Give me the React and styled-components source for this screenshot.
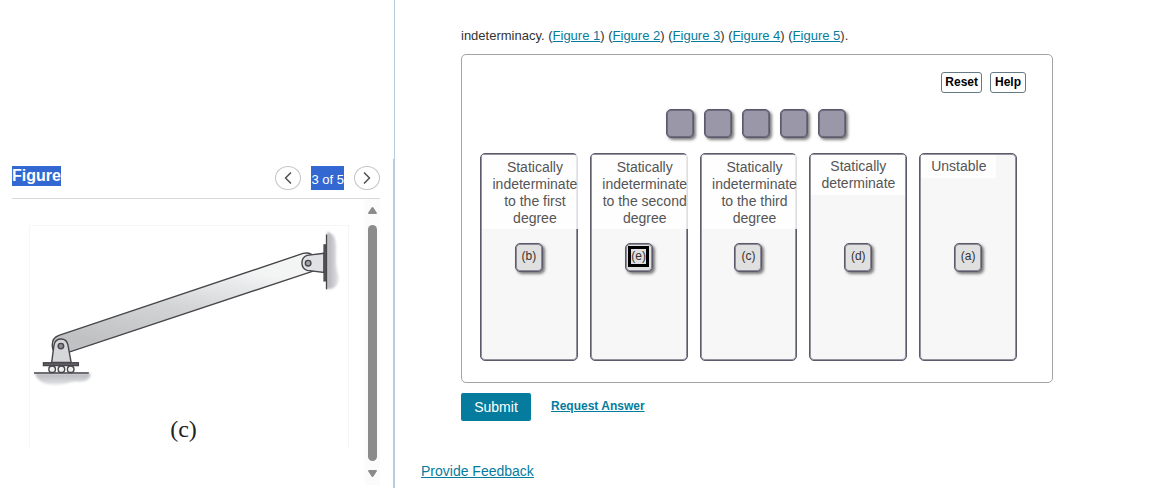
import React, { useState } from "react";
import styled, { createGlobalStyle } from "styled-components";
import { ChevronLeft, ChevronRight } from "lucide-react";

const figures = [1, 2, 3, 4, 5];

const bins = [
  { label: "Statically indeterminate to the first degree", item: "(b)", wide: true },
  { label: "Statically indeterminate to the second degree", item: "(e)", wide: true },
  { label: "Statically indeterminate to the third degree", item: "(c)", wide: true },
  { label: "Statically determinate", item: "(d)" },
  { label: "Unstable", item: "(a)" },
];

const BeamDrawing = () => (
  <Drawing viewBox="30 226 319 174" role="img" aria-label="Beam with a roller and a pin support">
    <defs>
      <linearGradient id="beam" gradientUnits="userSpaceOnUse" x1="150" y1="350" x2="165" y2="258">
        <stop offset="0" stopColor="#bfc1c3" />
        <stop offset="0.5" stopColor="#d2d4d6" />
        <stop offset="1" stopColor="#f3f4f4" />
      </linearGradient>
      <linearGradient id="ground" x1="0" y1="0" x2="0" y2="1">
        <stop offset="0" stopColor="#b4b5ba" />
        <stop offset="1" stopColor="#e4e4e8" />
      </linearGradient>
      <linearGradient id="wall" x1="0" y1="0" x2="1" y2="0">
        <stop offset="0" stopColor="#b0b0b5" />
        <stop offset="1" stopColor="#e2e2e6" />
      </linearGradient>
      <filter id="soft" x="-20%" y="-20%" width="140%" height="140%">
        <feGaussianBlur stdDeviation="1" />
      </filter>
    </defs>

    <path
      d="M35 374 H91 C90 380 86 383 78 382 C70 381 66 386 52 385 C42 385 37 380 35 374 Z"
      fill="url(#ground)"
      filter="url(#soft)"
    />
    <path
      d="M328 232 C334 233 337 238 337 246 C337 258 336 264 339 275 C341 285 335 290 328 289 Z"
      fill="url(#wall)"
      filter="url(#soft)"
    />

    <g stroke="#48464a" strokeWidth="1.4">
      <path
        d="M59 335.8 L304 253.5 C310 252 316 255 317 261 C318 267 316 271 311 272.2 L70 352.3 L53 350 C51 342 53 338 59 335.8 Z"
        fill="url(#beam)"
      />
      <path d="M51.7 363 L54 346 C55 337.5 66 337 68 345 L71.3 363 Z" fill="#d5d7d9" />
      <path d="M325 253.3 L308 255.5 A8 8 0 0 0 308 270.5 L325 272.7 Z" fill="#dfe1e3" />
      <circle cx="61" cy="346.5" r="2.8" fill="#8c8c90" />
      <circle cx="309" cy="263.3" r="2.8" fill="#a2a2a6" />
      <rect x="43.5" y="363.2" width="35" height="2.8" fill="#666469" />
      <circle cx="52.2" cy="369.7" r="3.3" fill="#eee" />
      <circle cx="61.5" cy="369.7" r="3.3" fill="#eee" />
      <circle cx="70.8" cy="369.7" r="3.3" fill="#eee" />
      <rect x="325" y="245" width="2" height="36" fill="#666469" />
      <path d="M34 373.5 H89" />
      <path d="M327.5 234.5 V289.5" />
    </g>
  </Drawing>
);

const App = () => {
  const [current, setCurrent] = useState(3);

  return (
    <Page>
      <GlobalStyle />
      <Sidebar>
        <FigurePanel>
          <FigureHeader>
            <FigureTitle>
              <Selected>Figure</Selected>
            </FigureTitle>
            <Pager>
              <RoundButton
                aria-label="Previous figure"
                onClick={() => setCurrent(Math.max(1, current - 1))}
              >
                <ChevronLeft size={20} />
              </RoundButton>
              <Counter>{current} of 5</Counter>
              <RoundButton
                aria-label="Next figure"
                onClick={() => setCurrent(Math.min(5, current + 1))}
              >
                <ChevronRight size={20} />
              </RoundButton>
            </Pager>
          </FigureHeader>
          <FigureBody>
            <FigureFrame>
              <BeamDrawing />
              <Caption>(c)</Caption>
            </FigureFrame>
            <ScrollTrack>
              <Arrow viewBox="0 0 9 7">
                <path d="M4.5 0 Q5 0 5.4 .6 L9 6 Q9 7 8 7 H1 Q0 7 0 6 L3.6 .6 Q4 0 4.5 0Z" />
              </Arrow>
              <ScrollThumb />
              <Arrow viewBox="0 0 9 7">
                <path d="M4.5 7 Q5 7 5.4 6.4 L9 1 Q9 0 8 0 H1 Q0 0 0 1 L3.6 6.4 Q4 7 4.5 7Z" />
              </Arrow>
            </ScrollTrack>
          </FigureBody>
        </FigurePanel>
      </Sidebar>

      <Main>
        <Question>
          <Prompt>
            indeterminacy.{" "}
            {figures.map((n) => (
              <React.Fragment key={n}>
                (<Link href={`#figure-${n}`}>Figure {n}</Link>){n < 5 ? " " : "."}
              </React.Fragment>
            ))}
          </Prompt>
          <Board>
            <Tools>
              <ToolButton>Reset</ToolButton>
              <ToolButton>Help</ToolButton>
            </Tools>
            <EmptySlots>
              {figures.map((n) => (
                <Slot key={n} />
              ))}
            </EmptySlots>
            <Bins>
              {bins.map((bin) => (
                <Bin key={bin.item}>
                  <BinHead>
                    <BinLabel $wide={bin.wide}>{bin.label}</BinLabel>
                  </BinHead>
                  <Tile>
                    <TileText $focused={bin.item === "(e)"}>{bin.item}</TileText>
                  </Tile>
                </Bin>
              ))}
            </Bins>
          </Board>
          <Actions>
            <Submit>Submit</Submit>
            <RequestLink href="#answer">Request Answer</RequestLink>
          </Actions>
        </Question>
        <FeedbackLink href="#feedback">Provide Feedback</FeedbackLink>
      </Main>
    </Page>
  );
};

export default App;

const GlobalStyle = createGlobalStyle`
  * {
    box-sizing: border-box;
  }

  body {
    margin: 0;
    background-color: #fff;
    font-family: "Liberation Sans", Arial, sans-serif;
    font-size: 13px;
    color: #333;
  }

  button {
    font-family: inherit;
    cursor: pointer;
  }
`;

const Page = styled.div`
  display: flex;
  min-height: 100vh;
`;

const Sidebar = styled.aside`
  display: flex;
  flex: 0 0 395px;
  padding-top: 159px;
  border-right: 1px solid #b9cddf;
`;

const FigurePanel = styled.section`
  flex: 1;
  padding: 7px 13px 0 12px;
  border-right: 1px solid #b9cddf;
`;

const FigureHeader = styled.header`
  display: flex;
  justify-content: space-between;
  align-items: flex-start;
  height: 33px;
  border-bottom: 1px solid #d9d9d9;
`;

const FigureTitle = styled.h2`
  margin: 0;
  font-size: 16px;
  line-height: 20px;
`;

const Selected = styled.span`
  display: block;
  color: #fff;
  background-color: #3367d1;
`;

const Pager = styled.div`
  display: flex;
  gap: 10px;
`;

const RoundButton = styled.button`
  display: flex;
  align-items: center;
  justify-content: center;
  width: 26px;
  height: 24px;
  padding: 0;
  border: 1px solid #c4c4c4;
  border-radius: 50%;
  background-color: #fff;
  color: #555;
`;

const Counter = styled.span`
  padding-top: 4px;
  line-height: 20px;
  color: #fff;
  background-color: #3367d1;
`;

const FigureBody = styled.div`
  display: flex;
  justify-content: space-between;
  height: 286px;
`;

const FigureFrame = styled.figure`
  display: flex;
  flex-direction: column;
  flex: 1;
  height: 223px;
  margin: 26px 16px 0 17px;
  border: 1px solid #f6f6f6;
  border-bottom: none;
`;

const Drawing = styled.svg`
  display: block;
  width: 100%;
`;

const Caption = styled.figcaption`
  margin-top: 16px;
  padding-right: 11px;
  font-family: "Liberation Serif", "Times New Roman", serif;
  font-size: 24px;
  line-height: 28px;
  text-align: center;
  color: #222;
`;

const ScrollTrack = styled.div`
  display: flex;
  flex-direction: column;
  align-items: center;
  gap: 9px;
  width: 15px;
  padding: 8px 0;
  background-color: #fbfbfb;
`;

const Arrow = styled.svg`
  width: 9px;
  height: 7px;
  fill: #8b8b8b;
`;

const ScrollThumb = styled.div`
  flex: 1;
  width: 9px;
  margin-top: 2px;
  border-radius: 5px;
  background-color: #8b8b8b;
`;

const Main = styled.main`
  flex: 1;
  padding: 26px 26px 8px;
`;

const Question = styled.section`
  max-width: 632px;
  padding-left: 40px;
`;

const Prompt = styled.p`
  margin: 0 0 8px;
  line-height: 20px;
`;

const Link = styled.a`
  color: #057c9e;
  text-decoration: underline;
`;

const Board = styled.div`
  padding: 17px 26px 21px 18px;
  border: 1px solid #a3a3a3;
  border-radius: 5px;
`;

const Tools = styled.div`
  display: flex;
  justify-content: flex-end;
  gap: 8px;
`;

const ToolButton = styled.button`
  min-width: 36px;
  height: 21px;
  padding: 0 3px 2px;
  border: 1px solid #647a85;
  border-radius: 3px;
  background-color: #fff;
  font-size: 12px;
  font-weight: bold;
  color: #000;
`;

const EmptySlots = styled.div`
  display: flex;
  justify-content: center;
  gap: 10px;
  margin: 16px 0 15px;
  padding-left: 6px;
`;

const Slot = styled.div`
  width: 28px;
  height: 29px;
  border: 1px solid #5c5a6b;
  border-radius: 5px;
  background-color: #9a98a8;
  box-shadow: inset 0 0 0 1px rgba(80, 78, 98, 0.6), 2px 2px 3px rgba(0, 0, 0, 0.5);
`;

const Bins = styled.div`
  display: grid;
  grid-template-columns: repeat(5, 1fr);
  gap: 12px;
  margin-right: 9px;
`;

const Bin = styled.div`
  display: flex;
  flex-direction: column;
  align-items: center;
  min-width: 0;
  height: 208px;
  padding: 1px;
  border: 1px solid #5c5a6b;
  border-radius: 5px;
  background-color: #f7f7f7;
  box-shadow: inset 0 0 0 1px rgba(80, 78, 98, 0.6);
`;

const BinHead = styled.div`
  width: 100%;
  height: 88px;
`;

const BinLabel = styled.div`
  width: ${(props) => (props.$wide ? "auto" : "fit-content")};
  margin-right: ${(props) => (props.$wide ? "-2px" : "0")};
  padding: ${(props) => (props.$wide ? "4px 0 2px 10px" : "3px 10px")};
  background-color: rgba(255, 255, 255, 0.8);
  font-size: 14px;
  line-height: 17px;
  text-align: center;
  color: #555;
`;

const Tile = styled.button`
  display: flex;
  align-items: flex-start;
  justify-content: center;
  width: 28px;
  height: 29px;
  padding: 5px 0 0;
  border: 1px solid #5c5a6b;
  border-radius: 5px;
  background-color: #e0e0e0;
  box-shadow: inset 0 0 0 1px rgba(80, 78, 98, 0.6), 2px 2px 3px rgba(0, 0, 0, 0.5);
`;

const TileText = styled.span`
  font-size: 12px;
  line-height: 15px;
  color: #333;
  outline: ${(props) => (props.$focused ? "3px solid #000" : "none")};
`;

const Actions = styled.div`
  display: flex;
  align-items: center;
  gap: 20px;
  margin-top: 10px;
`;

const Submit = styled.button`
  width: 70px;
  height: 28px;
  padding: 0;
  border: none;
  border-radius: 2px;
  background-color: #057c9e;
  font-size: 14px;
  color: #fff;
`;

const RequestLink = styled(Link)`
  padding-bottom: 2px;
  font-size: 12px;
  font-weight: bold;
`;

const FeedbackLink = styled(Link)`
  display: inline-block;
  margin-top: 42px;
  font-size: 14px;
  line-height: 16px;
`;
